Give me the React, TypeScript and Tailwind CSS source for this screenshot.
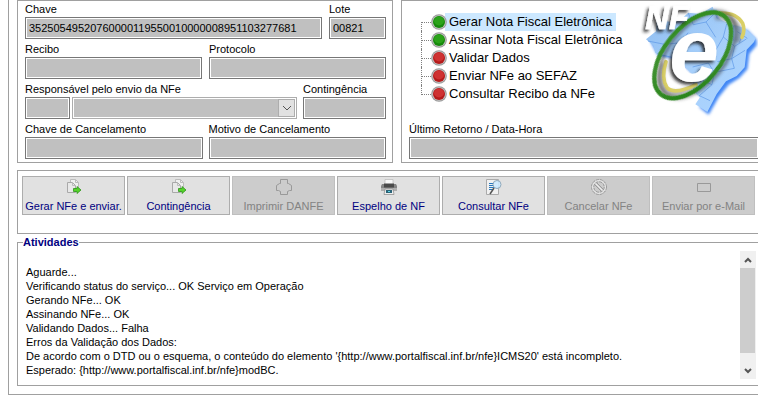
import type { ReactNode } from "react";

const fieldClass =
  "block h-[22px] w-full min-w-0 rounded-none border border-[#777777] bg-[#c0c0c0] px-[3px] text-[11px] text-black shadow-[inset_0_0_0_1px_white] outline-none";

function Field({ id, label, value = "", className = "" }: { id: string; label: string; value?: string; className?: string }) {
  return (
    <div className={`min-w-0 ${className}`}>
      <label htmlFor={id} className="block h-4 leading-4 whitespace-nowrap">{label}</label>
      <input id={id} className={fieldClass} value={value} readOnly />
    </div>
  );
}

function DocumentsIcon() {
  return (
    <svg viewBox="0 0 16 16" className="size-4" fill="none">
      <path d="M4.500 .5h5l3 3v8h-8z" fill="#f0f0f0" stroke="#bcbcbc" />
      <path d="M9.500 .5v3h3" stroke="#bcbcbc" />
      <path d="M1.500 3.500h5l3 3v7h-8z" fill="#e8e8e8" stroke="#a9a9a9" />
      <path d="M6.500 3.500v3h3" stroke="#bcbcbc" />
      <path d="M7.500 9.500h3.500v-2l4 3.500-4 3.500v-2H7.500z" fill="#55d32b" stroke="#2e941a" strokeWidth=".8" />
    </svg>
  );
}

function PrinterOutlineIcon() {
  return (
    <svg viewBox="0 0 16 16" className="size-4" fill="none" stroke="#999999">
      <path d="M4.500 .5h7v4h1l3 2v5h-2l-2 1v3h-7v-3l-2-1h-2v-5l3-2h1z" />
    </svg>
  );
}

function PrinterIcon() {
  return (
    <svg viewBox="0 0 16 16" className="size-4">
      <path d="M4 .5h8V6H4z" fill="#f8f8f8" stroke="#b8b8b8" strokeWidth=".7" />
      <path d="M1 5h14l1 2v5H0V7z" fill="#858585" />
      <path d="M3 4.500h10v4H3z" fill="#4a4a4a" />
      <path d="M0 9h16v3H0z" fill="#b0b0b0" />
      <path d="M4 10h8l1 5.500H3z" fill="#eeeeee" stroke="#888" strokeWidth=".7" />
      <path d="M5 11h6v3H5z" fill="#2b6478" />
      <path d="M7 12h2v1H7z" fill="#61d4e5" />
    </svg>
  );
}

function SearchDocumentIcon() {
  return (
    <svg viewBox="0 0 16 16" className="size-4" fill="none">
      <path d="M.5 .5h12v15H.5z" fill="#f1f1f1" stroke="#ababab" />
      <path d="M3 4.500h5M3 6.500h5M3 8.500h6M3 10.500h4" stroke="#2878bd" />
      <circle cx="11" cy="5.500" r="4" fill="#cdeaff" fillOpacity=".9" stroke="#91a9bb" />
      <path d="m8 9-4 6" stroke="#555" strokeWidth="1.500" />
    </svg>
  );
}

function CancelIcon() {
  return (
    <svg viewBox="0 0 16 16" className="size-4" fill="none" stroke="#9a9a9a">
      <circle cx="8" cy="8" r="7.500" strokeDasharray="3 1" />
      <circle cx="8" cy="8" r="6.300" stroke="#eeeeee" />
      <circle cx="8" cy="8" r="5.200" strokeDasharray="3 1" />
      <path d="m3.500 5.500 7 7M5.500 3.500l7 7" />
      <path d="m4.500 4.500 7 7" stroke="#eeeeee" />
    </svg>
  );
}

function MailIcon() {
  return (
    <svg viewBox="0 0 16 16" className="size-4" fill="none" stroke="#999999">
      <path d="M1.500 4.500h13v8h-13z" />
    </svg>
  );
}

function StatusLight({ done }: { done: boolean }) {
  return (
    <svg viewBox="0 0 16 16" className="z-10 size-4 shrink-0">
      <circle cx="8" cy="8" r="7.800" fill="#999999" />
      <circle cx="8" cy="8" r="6.800" fill="#c5c5c5" />
      <circle cx="8" cy="8" r="6" fill={done ? "#168a0c" : "#b51b1b"} />
      <ellipse cx="8" cy="7" rx="5" ry="4.400" fill={done ? "#2ba31a" : "#cf3232"} />
    </svg>
  );
}

function NfeLogo() {
  return (
    <svg viewBox="66 12 348 342" className="h-[114px] w-[116px] shrink-0 overflow-visible" role="img" aria-label="NFe">
      <defs>
        <filter id="soft" x="-20%" y="-20%" width="140%" height="140%"><feGaussianBlur stdDeviation="4" /></filter>
        <filter id="cast" x="-20%" y="-20%" width="150%" height="150%"><feDropShadow dx="-7" dy="8" stdDeviation="4" floodColor="#222222" floodOpacity=".85" /></filter>
        <filter id="castRight" x="-20%" y="-20%" width="150%" height="150%"><feDropShadow dx="10" dy="9" stdDeviation="5" floodColor="#333333" floodOpacity=".5" /></filter>
        <linearGradient id="map" x1="0" y1="0" x2="1" y2="1">
          <stop stopColor="#8fbdf0" /><stop offset=".5" stopColor="#a6cffb" /><stop offset="1" stopColor="#add5ff" />
        </linearGradient>
        <linearGradient id="ring" x1="1" y1="0" x2="0" y2="1">
          <stop stopColor="#2f8c1c" /><stop offset=".5" stopColor="#3f9030" /><stop offset="1" stopColor="#228014" />
        </linearGradient>
      </defs>
      <path d="M84 120 108 94 112 65 165 66 190 52 205 38 240 42 278 22 290 55 330 72 375 85 402 113 402 130 380 155 374 202 350 228 318 248 288 286 258 338 230 316 244 290 218 270 220 226 195 200 154 170 106 161Z" transform="translate(8 6)" fill="#3f86f5" filter="url(#soft)" />
      <path d="M78 118 108 94 110 62 165 66 190 52 205 38 240 42 278 20 290 55 330 72 375 85 407 113 402 126 380 149 374 202 350 228 318 244 290 282 262 336 226 313 240 292 218 270 220 226 195 200 154 170 106 159 100 137Z" fill="url(#map)" />
      <path d="m84 123 50 10 50-5 20-30M205 40l15 34 38-8 29 46M258 66l28-28M320 72l-10 39 34 28 35-22M340 78v44M310 111l-28 48-47 20M344 139l-9 37-43 9M375 151l-40 25 8 29-60 12-18-28-47 12M283 217l-7 37-49-20M276 254l-38 33 32 15M352 95l30 20M358 128l12-28" fill="none" stroke="#5b95e6" strokeWidth="2" />
      <g fill="none" strokeLinecap="round">
        <path d="M300 45Q345 42 362 72 370 90 362 112M139 188Q124 235 143 263 165 286 228 254" stroke="#666" strokeOpacity=".45" strokeWidth="18" transform="translate(-8 8)" filter="url(#soft)" />
        <path d="M302 39Q350 38 368 70 376 90 366 112M138 185Q122 232 141 263 164 286 228 254" stroke="#d9cf66" strokeWidth="11" />
      </g>
      <text x="148" y="244" fontSize="268" fontFamily="'Liberation Sans', Arial, sans-serif" fontStyle="italic" fontWeight="700" fill="white" filter="url(#cast)">e</text>
      <ellipse cx="218" cy="166" rx="151" ry="84" transform="rotate(-51 218 166)" fill="none" stroke="url(#ring)" strokeWidth="13" filter="url(#castRight)" />
      <text x="76" y="86" fontSize="98" fontFamily="'Liberation Sans', Arial, sans-serif" fontStyle="italic" fontWeight="700" fill="white" stroke="white" strokeWidth="2" filter="url(#cast)">NF</text>
    </svg>
  );
}

const steps = [
  { name: "Gerar Nota Fiscal Eletrônica", done: true },
  { name: "Assinar Nota Fiscal Eletrônica", done: true },
  { name: "Validar Dados", done: false },
  { name: "Enviar NFe ao SEFAZ", done: false },
  { name: "Consultar Recibo da NFe", done: false },
];

const actions: { label: string; icon: ReactNode; disabled?: boolean }[] = [
  { label: "Gerar NFe e enviar.", icon: <DocumentsIcon /> },
  { label: "Contingência", icon: <DocumentsIcon /> },
  { label: "Imprimir DANFE", icon: <PrinterOutlineIcon />, disabled: true },
  { label: "Espelho de NF", icon: <PrinterIcon /> },
  { label: "Consultar NFe", icon: <SearchDocumentIcon /> },
  { label: "Cancelar NFe", icon: <CancelIcon />, disabled: true },
  { label: "Enviar por e-Mail", icon: <MailIcon />, disabled: true },
];

const log = `
Aguarde...
Verificando status do serviço... OK Serviço em Operação
Gerando NFe... OK
Assinando NFe... OK
Validando Dados... Falha
Erros da Validação dos Dados:
De acordo com o DTD ou o esquema, o conteúdo do elemento '{http://www.portalfiscal.inf.br/nfe}ICMS20' está incompleto.
Esperado: {http://www.portalfiscal.inf.br/nfe}modBC.`;

export default function App() {
  return (
    <main className="bg-white pb-4 pl-2 font-['Liberation_Sans',Arial,sans-serif] text-[11px] text-black">
      <div className="flex flex-col border-b border-l border-[#a0a0a0] pb-2 pl-2">
        <div className="flex gap-2">
          <section className="flex w-[376px] shrink-0 flex-col gap-[2px] border border-[#a0a0a0] pr-[6px] pb-[3px] pl-[7px]">
            <div className="flex gap-[7px]">
              <Field id="chave" label="Chave" value="35250549520760000119550010000008951103277681" className="flex-1" />
              <Field id="lote" label="Lote" value="00821" className="w-[57px]" />
            </div>
            <div className="flex gap-[7px]">
              <Field id="recibo" label="Recibo" className="flex-1" />
              <Field id="protocolo" label="Protocolo" className="flex-1" />
            </div>
            <div className="flex items-end gap-[6px]">
              <div className="min-w-0 flex-1">
                <label htmlFor="responsavel" className="block h-4 leading-4">Responsável pelo envio da NFe</label>
                <div className="flex gap-[2px]">
                  <div className="w-[45px] shrink-0"><input id="responsavel" className={fieldClass} readOnly /></div>
                  <div className="relative min-w-0 flex-1">
                    <select aria-label="Responsável" className="block h-[22px] w-full appearance-none border border-[#adadad] bg-[#c0c0c0] shadow-[inset_0_0_0_1px_white] outline-none">
                      <option></option>
                    </select>
                    <span className="pointer-events-none absolute top-[2px] right-[2px] flex h-[18px] w-[17px] items-center justify-center border border-[#adadad] bg-[#e1e1e1]">
                      <svg viewBox="0 0 10 6" className="h-[6px] w-[10px]" fill="none" stroke="#555"><path d="m1 1 4 4 4-4" /></svg>
                    </span>
                  </div>
                </div>
              </div>
              <Field id="contingencia" label="Contingência" className="w-[83px]" />
            </div>
            <div className="flex gap-[6px]">
              <Field id="chave-cancelamento" label="Chave de Cancelamento" className="flex-1" />
              <Field id="motivo-cancelamento" label="Motivo de Cancelamento" className="flex-1" />
            </div>
          </section>

          <section className="flex min-w-0 flex-1 flex-col border-y border-l border-[#a0a0a0] pl-[7px]">
            <div className="flex h-[120px] justify-between">
              <ul className="mt-3 ml-3 text-[13px] leading-[18px]">
                {steps.map((step, index) => (
                  <li key={step.name} className="flex h-[18px] items-center">
                    <span className={`w-[10px] shrink-0 self-stretch border-l border-dotted border-[#808080] ${index === 0 ? "mt-[9px]" : index === steps.length - 1 ? "mb-[8px]" : ""}`}>
                      <span className={`block border-b border-dotted border-[#808080] ${index === 0 ? "h-px" : "h-[10px]"}`} />
                    </span>
                    <StatusLight done={step.done} />
                    <span className={`-ml-[2px] pr-1 pl-1 whitespace-nowrap ${index === 0 ? "bg-[#cce8ff]" : ""}`}>{step.name}</span>
                  </li>
                ))}
              </ul>
              <div className="pt-[3px]"><NfeLogo /></div>
            </div>
            <label htmlFor="retorno" className="block h-4 leading-4">Último Retorno / Data-Hora</label>
            <input id="retorno" className={`${fieldClass} border-r-0`} readOnly />
          </section>
        </div>

        <section className="mt-[7px] flex h-16 items-start gap-[2px] border-y border-l border-[#a0a0a0] pt-[5px] pr-[3px] pl-1">
          {actions.map((action) => (
            <button
              key={action.label}
              type="button"
              disabled={action.disabled}
              className={`flex h-[39px] min-w-0 flex-1 flex-col items-center border pt-[2px] whitespace-nowrap ${action.disabled ? "border-[#bfbfbf] bg-[#cccccc] text-[#838383]" : "border-[#adadad] bg-[#e1e1e1] text-[#000080]"}`}
            >
              {action.icon}
              <span className="mt-[3px] leading-4">{action.label}</span>
            </button>
          ))}
        </section>

        <fieldset className="mt-px min-w-0 border-y border-l border-[#a0a0a0] pb-[6px] pl-[6px]">
          <legend className="-ml-[1px] h-[14px] leading-[14px] font-bold text-[#000080]">Atividades</legend>
          <div className="flex pt-[2px] pr-[2px]">
            <textarea aria-label="Atividades" readOnly value={log} className="block h-32 min-w-0 flex-1 resize-none overflow-hidden pl-[2px] text-[11px] leading-[14px] outline-none" />
            <div className="flex h-32 w-4 shrink-0 flex-col bg-[#f0f0f0]">
              <button type="button" aria-label="Rolar para cima" className="flex h-[17px] items-center justify-center">
                <svg viewBox="0 0 8 6" className="h-[6px] w-2" fill="none" stroke="#555" strokeWidth="2"><path d="m1 5 3-3 3 3" /></svg>
              </button>
              <div className="h-[85px] w-[15px] bg-[#cdcdcd]" />
              <button type="button" aria-label="Rolar para baixo" className="mt-auto flex h-[17px] items-center justify-center">
                <svg viewBox="0 0 8 6" className="h-[6px] w-2" fill="none" stroke="#555" strokeWidth="2"><path d="m1 1 3 3 3-3" /></svg>
              </button>
            </div>
          </div>
        </fieldset>
      </div>
    </main>
  );
}
